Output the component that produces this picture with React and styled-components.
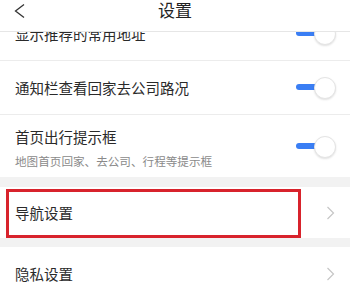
import React from "react";
import styled, { createGlobalStyle } from "styled-components";

const Global = createGlobalStyle`
  html, body { margin: 0; padding: 0; background: #fff; }
  body { font-family: "Noto Sans CJK SC", "Noto Sans", sans-serif; }
`;

const Screen = styled.div`
  width: 350px;
  height: 282px;
  display: flex;
  flex-direction: column;
  overflow: hidden;
  background: #fff;
`;

const Header = styled.header`
  position: relative;
  z-index: 2;
  flex: none;
  height: 31px;
  border-bottom: 1px solid #e6e6e6;
  background: #fff;
  display: grid;
  grid-template-columns: 40px 1fr 40px;
  align-items: start;
`;

const BackBtn = styled.div`
  display: flex;
  align-items: center;
  padding-left: 14px;
  height: 21px;
`;

const Title = styled.h1`
  margin: 0;
  font-size: 17px;
  font-weight: 400;
  color: #222;
  text-align: center;
  line-height: 20px;
`;

const Viewport = styled.div`
  flex: 1;
  overflow: hidden;
`;

const List = styled.div`
  margin-top: -25px;
  display: flex;
  flex-direction: column;
`;

const Group = styled.section`
  background: #fff;
  display: flex;
  flex-direction: column;
`;

const Gap = styled.div`
  height: ${(p) => p.$h}px;
  background: #f2f2f2;
`;

const Row = styled.div`
  position: relative;
  display: flex;
  align-items: center;
  justify-content: space-between;
  height: ${(p) => p.$h}px;
  padding: 0 14px 0 15px;
  box-sizing: border-box;
  border-bottom: ${(p) => (p.$divider ? "1px solid #ececec" : "none")};
  background: #fff;
`;

const TextCol = styled.div`
  display: flex;
  flex-direction: column;
  gap: ${(p) => p.$gap || 0}px;
  margin-top: ${(p) => p.$mt || 0}px;
`;

const Label = styled.span`
  font-size: 14.5px;
  line-height: 20px;
  color: #2a2a2a;
  white-space: nowrap;
`;

const Sub = styled.span`
  font-size: 11.6px;
  line-height: 16px;
  color: #8a8a8a;
  white-space: nowrap;
`;

const Switch = styled.div`
  position: relative;
  width: 40px;
  height: 21px;
  flex: none;
  &::before {
    content: "";
    position: absolute;
    left: 0;
    top: 7px;
    width: 22px;
    height: 6px;
    border-radius: 3px;
    background: #3a7ef4;
  }
  &::after {
    content: "";
    position: absolute;
    right: 0;
    top: 0;
    width: 20px;
    height: 20px;
    border-radius: 50%;
    background: #fff;
    border: 0.5px solid #e4e4e4;
    box-shadow: 0 1px 2px rgba(0, 0, 0, 0.12);
  }
`;

const Highlight = styled.div`
  position: absolute;
  left: 6px;
  top: 2px;
  width: 295px;
  height: 49px;
  border: 3px solid #d8232c;
  box-sizing: border-box;
  pointer-events: none;
  z-index: 1;
`;

const Chevron = ({ color = "#c6c6c6" }) => (
  <svg width="9" height="14" viewBox="0 0 9 14" style={{ display: "block", marginRight: 1 }}>
    <polyline points="1.5,1 7.5,7 1.5,13" fill="none" stroke={color} strokeWidth="1.2" />
  </svg>
);

export default function App() {
  return (
    <>
      <Global />
      <Screen>
        <Header>
          <BackBtn>
            <svg width="12" height="16" viewBox="0 0 12 16">
              <polyline points="10,1.5 1.5,8 10,14.5" fill="none" stroke="#333" strokeWidth="1.3" />
            </svg>
          </BackBtn>
          <Title>设置</Title>
          <div />
        </Header>
        <Viewport>
          <List>
            <Group>
              <Row $h={54} $divider>
                <Label>显示推荐的常用地址</Label>
                <Switch />
              </Row>
              <Row $h={54} $divider>
                <Label>通知栏查看回家去公司路况</Label>
                <Switch />
              </Row>
              <Row $h={62}>
                <TextCol $gap={6} $mt={4}>
                  <Label>首页出行提示框</Label>
                  <Sub>地图首页回家、去公司、行程等提示框</Sub>
                </TextCol>
                <Switch />
              </Row>
            </Group>
            <Gap $h={10} />
            <Group>
              <Row $h={51}>
                <Label>导航设置</Label>
                <Chevron />
                <Highlight />
              </Row>
            </Group>
            <Gap $h={9} />
            <Group>
              <Row $h={54}>
                <Label>隐私设置</Label>
                <Chevron />
              </Row>
            </Group>
          </List>
        </Viewport>
      </Screen>
    </>
  );
}
